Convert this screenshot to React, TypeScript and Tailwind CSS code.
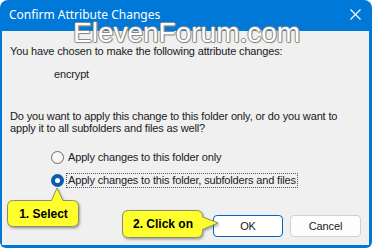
import React from 'react';

const body = { fontFamily: '"Liberation Sans", Arial, sans-serif' };
const ui = { fontFamily: '"Noto Sans", "Open Sans", sans-serif' };

const Radio: React.FC<{ checked?: boolean }> = ({ checked }) =>
    checked ? (
        <span className="w-[13px] h-[13px] rounded-full bg-[#0b5cad] flex items-center justify-center shrink-0">
            <span className="w-[5px] h-[5px] rounded-full bg-white" />
        </span>
    ) : (
        <span className="w-[13px] h-[13px] rounded-full border border-[#6b6b6b] bg-[#f7f7f7] shrink-0" />
    );

export default function App() {
    return (
        <div className="w-[373px] h-[250px] bg-white">
            <div className="relative w-[372px] h-[248px] bg-[#0078d7] rounded-t-[8px] rounded-b-[6px] flex flex-col overflow-hidden">
                <div className="h-[31px] flex items-center justify-between pl-[9px] pr-[11px] text-white text-[12px]" style={ui}>
                    <span className="-mt-[1px]">Confirm Attribute Changes</span>
                    <svg width="11" height="11" viewBox="0 0 11 11" className="-mt-[2px]">
                        <path d="M0.5 0.5 L10.5 10.5 M10.5 0.5 L0.5 10.5" stroke="#fff" strokeWidth="1.1" />
                    </svg>
                </div>

                <div className="flex-1 ml-[2px] mr-[3px] mb-[3px] bg-[#f0f0f0] flex flex-col pt-[14px] pl-[8px] text-[11px] text-[#1a1a1a] tracking-[-0.15px]" style={body}>
                    <p className="leading-[13px]">You have chosen to make the following attribute changes:</p>
                    <p className="leading-[13px] mt-[10px] ml-[44px]">encrypt</p>
                    <p className="leading-[12px] mt-[29px]">
                        Do you want to apply this change to this folder only, or do you want to
                        <br />
                        apply it to all subfolders and files as well?
                    </p>
                    <div className="mt-[16px] ml-[41px] flex flex-col gap-[8px]">
                        <div className="h-[15px] flex items-center gap-[3px]">
                            <Radio />
                            <span className="leading-[13px] px-[1px]">Apply changes to this folder only</span>
                        </div>
                        <div className="h-[15px] flex items-center gap-[2px]">
                            <Radio checked />
                            <span className="leading-[13px] px-[1px] border border-dotted border-[#555]">
                                Apply changes to this folder, subfolders and files
                            </span>
                        </div>
                    </div>
                    <div className="mt-auto mb-[8px] mr-[8px] flex justify-end gap-[7px]">
                        <button className="w-[70px] h-[22px] rounded-[4px] bg-white border border-[#0067c0] text-[11px] text-[#1a1a1a]">
                            OK
                        </button>
                        <button className="w-[71px] h-[22px] rounded-[4px] bg-[#fdfdfd] border border-[#d0d0d0] text-[11px] text-[#1a1a1a]">
                            Cancel
                        </button>
                    </div>
                </div>

                <div
                    className="absolute left-[73px] top-[19px] text-[28px] leading-[28px] text-white pointer-events-none [text-shadow:1px_0_0_#8a8a8a,-1px_0_0_#8a8a8a,0_1px_0_#8a8a8a,0_-1px_0_#8a8a8a,1px_1px_1px_#9a9a9a]"
                    style={body}
                >
                    ElevenForum.com
                </div>

                <svg className="absolute inset-0 pointer-events-none" width="372" height="248">
                    <defs>
                        <filter id="sh" x="-20%" y="-20%" width="140%" height="160%">
                            <feDropShadow dx="1" dy="1.5" stdDeviation="1" floodColor="#000" floodOpacity="0.35" />
                        </filter>
                    </defs>
                    <path
                        d="M13.5 200.5 H51.5 L57 188 L63 200.5 H72.5 Q78.5 200.5 78.5 206.5 V220.5 Q78.5 226.5 72.5 226.5 H13.5 Q7.5 226.5 7.5 220.5 V206.5 Q7.5 200.5 13.5 200.5 Z"
                        fill="#ffff2e"
                        stroke="#8c8c6a"
                        filter="url(#sh)"
                    />
                    <path
                        d="M128.5 210.5 H196.5 Q202.5 210.5 202.5 216.5 V217 L218 223 L202.5 229.5 V231.5 Q202.5 237.5 196.5 237.5 H128.5 Q122.5 237.5 122.5 231.5 V216.5 Q122.5 210.5 128.5 210.5 Z"
                        fill="#ffff2e"
                        stroke="#8c8c6a"
                        filter="url(#sh)"
                    />
                </svg>
                <div className="absolute left-[8px] top-[200px] w-[71px] h-[27px] flex items-center justify-center text-[12px] font-bold text-black" style={body}>
                    1. Select
                </div>
                <div className="absolute left-[123px] top-[210px] w-[80px] h-[28px] flex items-center justify-center text-[12px] font-bold text-black" style={body}>
                    2. Click on
                </div>
            </div>
        </div>
    );
}
